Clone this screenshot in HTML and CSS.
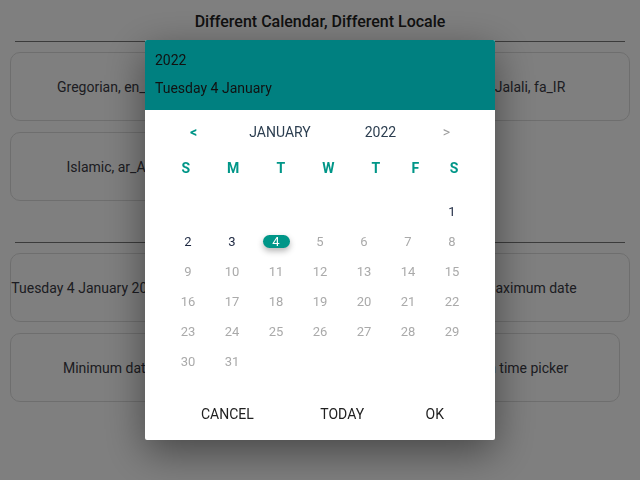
FILE: index.html
```html
<!DOCTYPE html>
<html lang="en">
<head>
    <meta charset="UTF-8">
    <meta name="viewport" content="width=device-width, initial-scale=1.0">
    <title>Date Picker Demo</title>
    <link rel="stylesheet" href="styles.css">
</head>
<body>
    <div class="page">
        <section class="section">
            <h2 class="section-title">Different Calendar, Different Locale</h2>
            <hr class="divider">
            <div class="card-grid">
                <div class="card">Gregorian, en_US</div>
                <div class="card">Hebrew, he_IL</div>
                <div class="card">Jalali, fa_IR</div>
                <div class="card">Islamic, ar_AE</div>
            </div>
        </section>

        <section class="section">
            <h2 class="section-title">Options</h2>
            <hr class="divider">
            <div class="card-grid">
                <div class="card"><span class="nowrap">Tuesday 4 January 2022 - 00:00</span></div>
                <div class="card">Default value</div>
                <div class="card">Maximum date</div>
            </div>
            <div class="card-grid last-row">
                <div class="card">Minimum date</div>
                <div class="card">Disabled dates</div>
                <div class="card">With time picker</div>
            </div>
        </section>
    </div>

    <div class="overlay">
        <div class="picker">
            <div class="picker-header">
                <div class="picker-year">2022</div>
                <div class="picker-date">Tuesday 4 January</div>
            </div>

            <div class="picker-body">
                <div class="picker-nav">
                    <span class="nav-arrow prev">&lt;</span>
                    <span class="nav-month">JANUARY</span>
                    <span class="nav-year">2022</span>
                    <span class="nav-arrow next">&gt;</span>
                </div>

                <div class="weekdays">
                    <span>S</span>
                    <span>M</span>
                    <span>T</span>
                    <span>W</span>
                    <span>T</span>
                    <span>F</span>
                    <span>S</span>
                </div>

                <div class="days">
                    <span></span><span></span><span></span><span></span><span></span><span></span>
                    <span class="day">1</span>
                    <span class="day">2</span>
                    <span class="day">3</span>
                    <span class="day selected"><b>4</b></span>
                    <span class="day disabled">5</span>
                    <span class="day disabled">6</span>
                    <span class="day disabled">7</span>
                    <span class="day disabled">8</span>
                    <span class="day disabled">9</span>
                    <span class="day disabled">10</span>
                    <span class="day disabled">11</span>
                    <span class="day disabled">12</span>
                    <span class="day disabled">13</span>
                    <span class="day disabled">14</span>
                    <span class="day disabled">15</span>
                    <span class="day disabled">16</span>
                    <span class="day disabled">17</span>
                    <span class="day disabled">18</span>
                    <span class="day disabled">19</span>
                    <span class="day disabled">20</span>
                    <span class="day disabled">21</span>
                    <span class="day disabled">22</span>
                    <span class="day disabled">23</span>
                    <span class="day disabled">24</span>
                    <span class="day disabled">25</span>
                    <span class="day disabled">26</span>
                    <span class="day disabled">27</span>
                    <span class="day disabled">28</span>
                    <span class="day disabled">29</span>
                    <span class="day disabled">30</span>
                    <span class="day disabled">31</span>
                </div>

                <div class="picker-actions">
                    <button class="action-btn">Cancel</button>
                    <button class="action-btn today">Today</button>
                    <button class="action-btn">OK</button>
                </div>
            </div>
        </div>
    </div>
</body>
</html>
```

FILE: styles.css
```css
* {
    margin: 0;
    padding: 0;
    box-sizing: border-box;
}

body {
    font-family: Roboto, 'Liberation Sans', sans-serif;
    color: #2c3e50;
    background: #fff;
    width: 640px;
    height: 480px;
    overflow: hidden;
}

.page {
    padding: 0 10px;
}

.section-title {
    margin-top: 12px;
    font-size: 16px;
    font-weight: 500;
    line-height: 19px;
    text-align: center;
    color: #222;
}

.divider {
    margin: 10px 5px 10px;
    border: none;
    border-top: 1px solid #777;
}

.card-grid {
    display: grid;
    grid-template-columns: repeat(3, 200px);
    gap: 11px 10px;
}

.card-grid.last-row {
    margin-top: 11px;
    grid-template-columns: 196px 190px 204px;
}

.card {
    height: 69px;
    border: 1px solid #ddd;
    border-radius: 10px;
    display: flex;
    align-items: center;
    justify-content: center;
    font-size: 14px;
    color: #3a3a44;
}

.nowrap {
    white-space: nowrap;
}

/* dialog */

.overlay {
    position: fixed;
    inset: 0;
    background: rgba(0, 0, 0, 0.5);
    display: flex;
    align-items: center;
    justify-content: center;
}

.picker {
    width: 350px;
    height: 400px;
    background: #fff;
    border-radius: 2px;
    box-shadow: 0 12px 40px rgba(0, 0, 0, 0.45);
    overflow: hidden;
}

.picker-header {
    height: 70px;
    background: #008080;
    color: #111;
    padding: 6px 10px 0;
    font-size: 14px;
    line-height: 28px;
}

.picker-body {
    padding-top: 10px;
}

.picker-nav {
    display: grid;
    grid-template-columns: 47px 126px 75px 57px;
    margin-left: 25px;
    height: 24px;
    align-items: center;
    text-align: center;
    font-size: 14px;
    color: #2c3e50;
}

.nav-arrow {
    font-size: 14px;
    font-weight: 700;
}

.nav-arrow.prev {
    color: #009688;
}

.nav-arrow.next {
    color: #9e9e9e;
    font-weight: 400;
}

.weekdays {
    display: grid;
    grid-template-columns: repeat(5, 47.5px) 31.5px 46px;
    margin: 12px 0 0 17px;
    height: 24px;
    align-items: center;
    text-align: center;
    font-size: 14px;
    font-weight: 700;
    color: #009688;
}

.days {
    display: grid;
    grid-template-columns: repeat(7, 44px);
    grid-auto-rows: 30px;
    margin: 16px 0 0 21px;
    height: 180px;
    font-size: 13px;
}

.day {
    display: flex;
    align-items: center;
    justify-content: center;
    color: #1c2740;
}

.day.disabled {
    color: #aaa;
}

.day.selected b {
    display: flex;
    align-items: center;
    justify-content: center;
    width: 27px;
    height: 13px;
    border-radius: 7px;
    background: #009688;
    color: #fff;
    font-weight: 400;
    box-shadow: 0 3px 6px rgba(0, 0, 0, 0.3);
}

.picker-actions {
    display: flex;
    justify-content: space-between;
    align-items: center;
    margin-top: 20px;
    height: 36px;
    padding: 0 51px 0 56px;
}

.action-btn {
    background: none;
    border: none;
    font-family: inherit;
    font-size: 14px;
    text-transform: uppercase;
    color: #212121;
    cursor: pointer;
}

.action-btn.today {
    margin-left: 5px;
}
```
